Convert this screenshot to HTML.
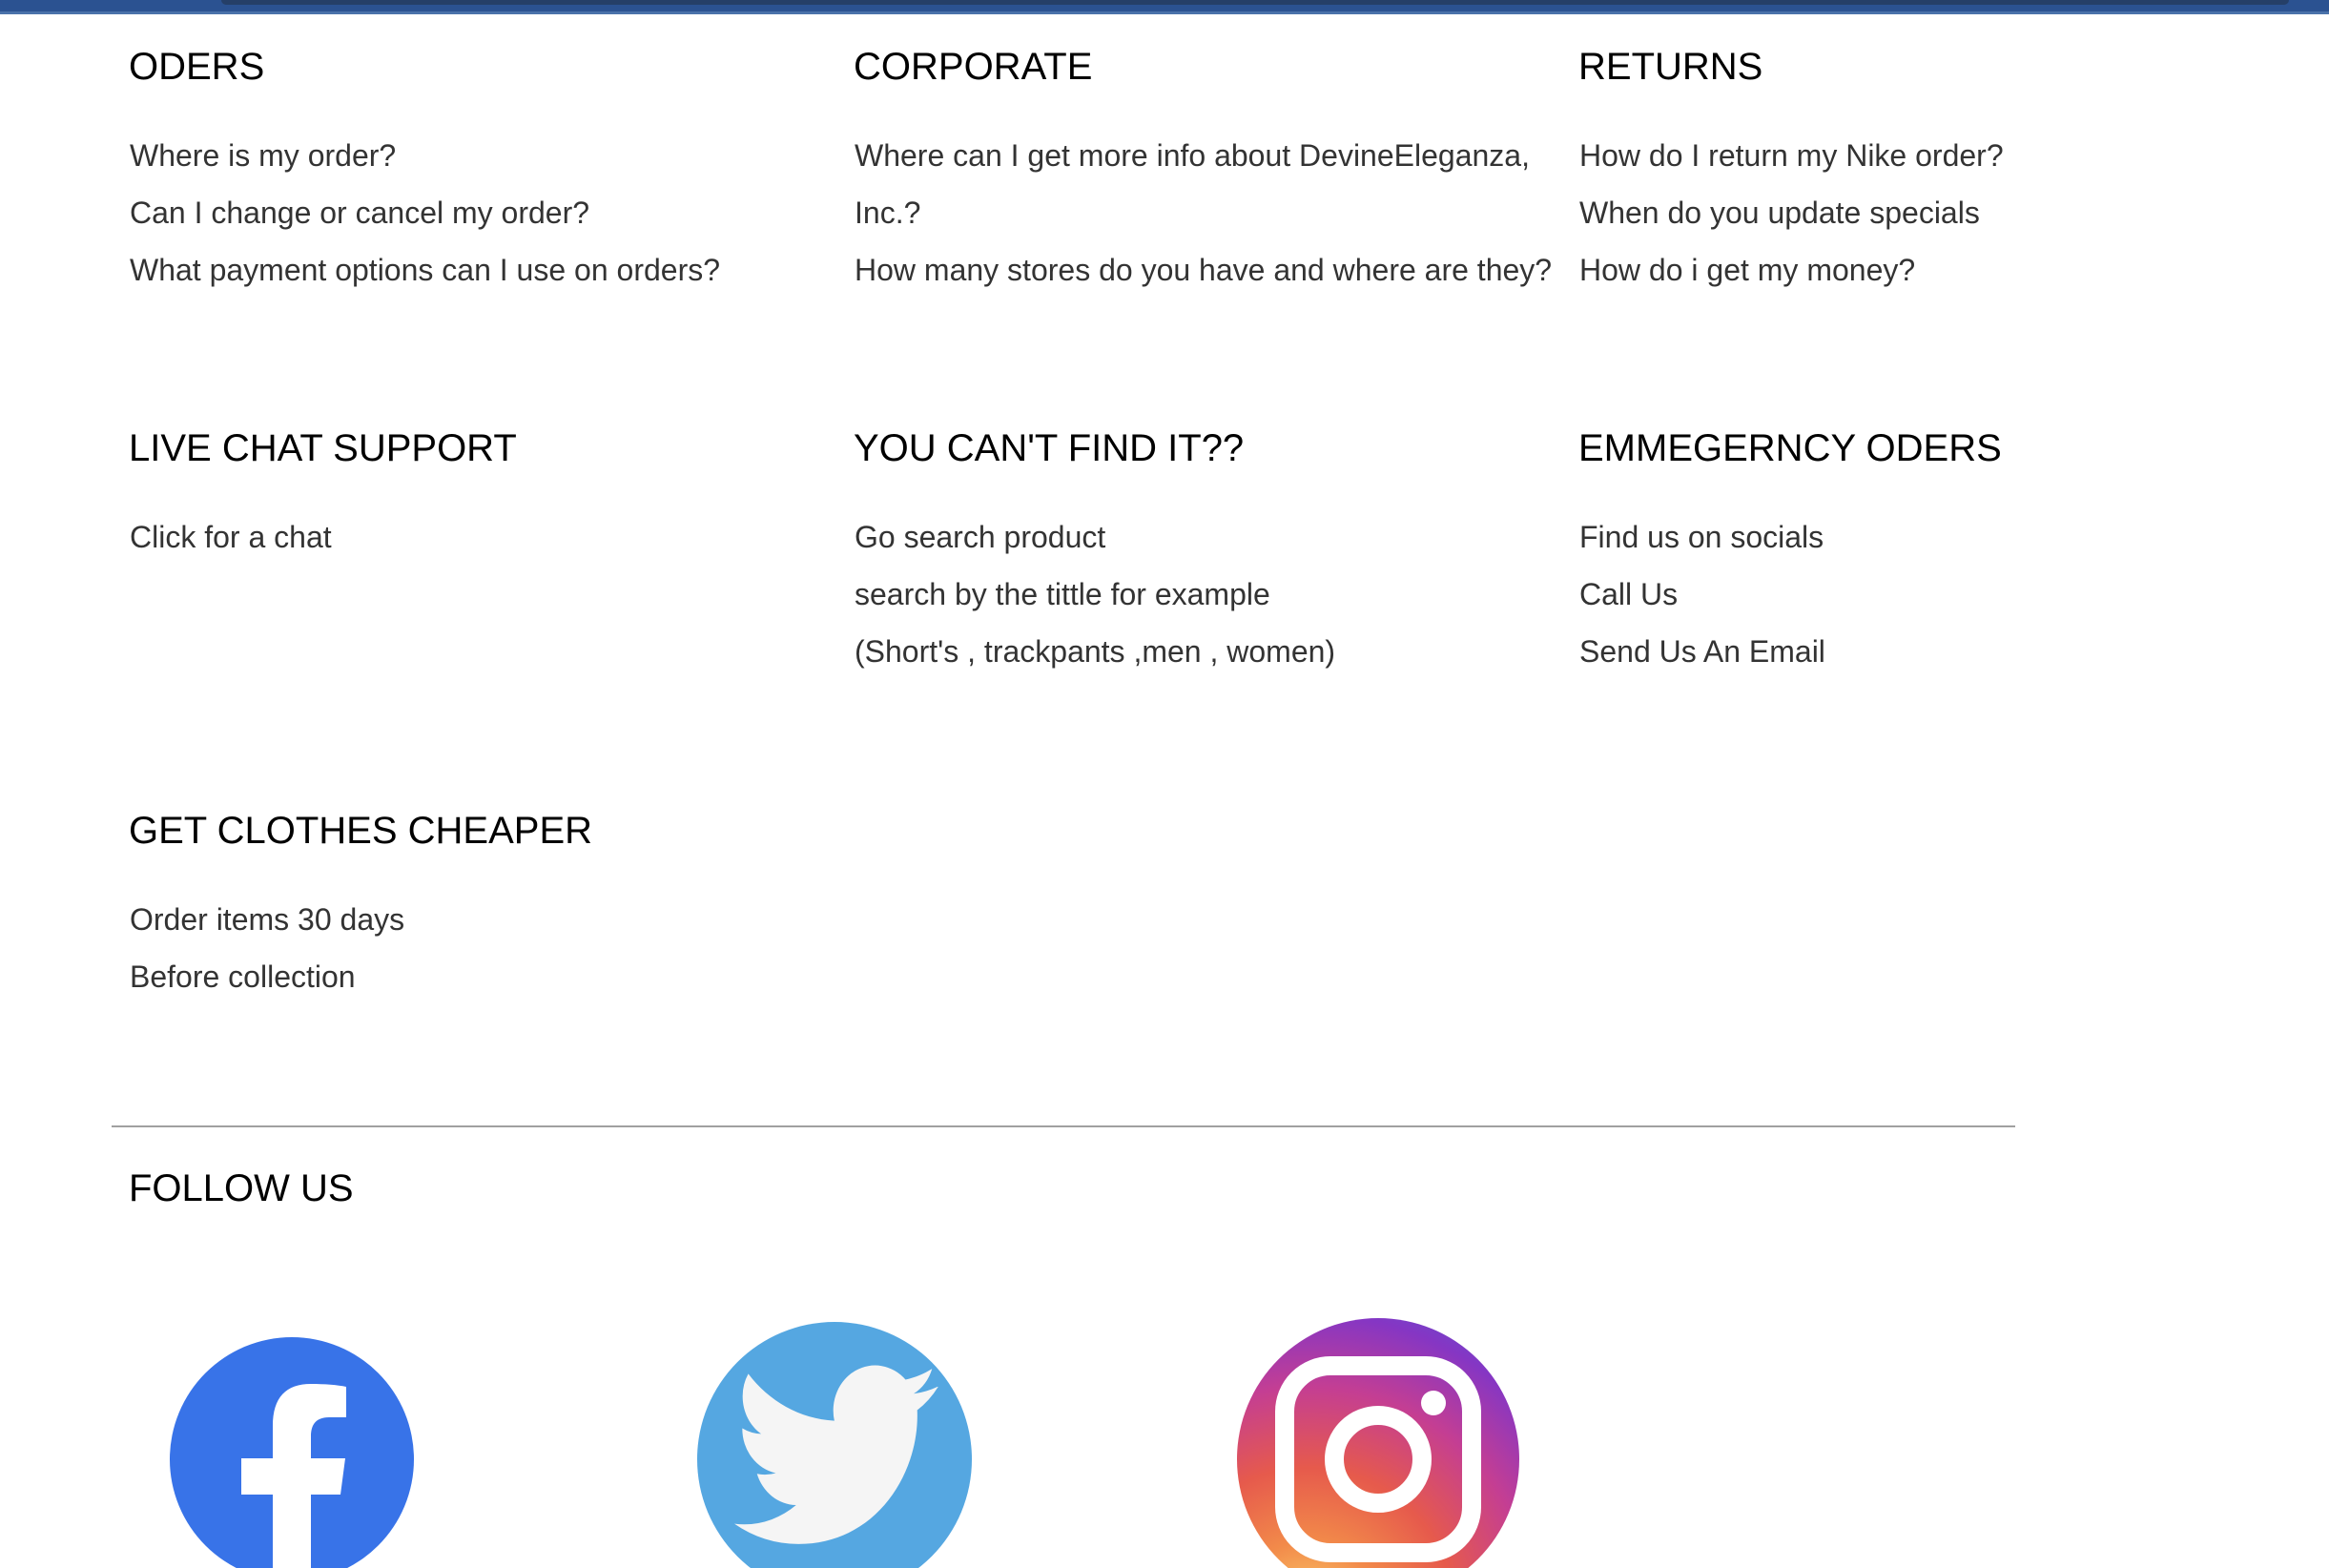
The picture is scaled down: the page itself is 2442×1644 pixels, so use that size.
<!DOCTYPE html>
<html><head><meta charset="utf-8">
<style>
html,body{margin:0;padding:0;background:#fff;width:2442px;height:1644px;overflow:hidden;position:relative;font-family:"Liberation Sans",Arial,sans-serif}
.h{position:absolute;font-size:40px;line-height:40px;color:#000;white-space:nowrap}
.l{position:absolute;font-size:32px;line-height:32px;color:#333;white-space:nowrap}
</style></head><body>
<div style="position:absolute;left:0;top:0;width:2442px;height:15px;background:#2b5291"></div>
<div style="position:absolute;left:232px;top:0;width:2168px;height:5px;background:#253f68;border-radius:0 0 8px 8px"></div>
<div style="position:absolute;left:0;top:12px;width:2442px;height:3px;background:#4a72aa"></div>

<div class="h" style="left:135px;top:50px">ODERS</div>
<div class="h" style="left:895px;top:50px">CORPORATE</div>
<div class="h" style="left:1655px;top:50px">RETURNS</div>
<div class="l" style="left:136px;top:147px">Where is my order?</div>
<div class="l" style="left:136px;top:207px">Can I change or cancel my order?</div>
<div class="l" style="left:136px;top:267px">What payment options can I use on orders?</div>
<div class="l" style="left:896px;top:147px">Where can I get more info about DevineEleganza,</div>
<div class="l" style="left:896px;top:207px">Inc.?</div>
<div class="l" style="left:896px;top:267px">How many stores do you have and where are they?</div>
<div class="l" style="left:1656px;top:147px">How do I return my Nike order?</div>
<div class="l" style="left:1656px;top:207px">When do you update specials</div>
<div class="l" style="left:1656px;top:267px">How do i get my money?</div>

<div class="h" style="left:135px;top:450px">LIVE CHAT SUPPORT</div>
<div class="h" style="left:895px;top:450px">YOU CAN'T FIND IT??</div>
<div class="h" style="left:1655px;top:450px">EMMEGERNCY ODERS</div>
<div class="l" style="left:136px;top:547px">Click for a chat</div>
<div class="l" style="left:896px;top:547px">Go search product</div>
<div class="l" style="left:896px;top:607px">search by the tittle for example</div>
<div class="l" style="left:896px;top:667px">(Short's , trackpants ,men , women)</div>
<div class="l" style="left:1656px;top:547px">Find us on socials</div>
<div class="l" style="left:1656px;top:607px">Call Us</div>
<div class="l" style="left:1656px;top:667px">Send Us An Email</div>

<div class="h" style="left:135px;top:851px">GET CLOTHES CHEAPER</div>
<div class="l" style="left:136px;top:948px">Order items 30 days</div>
<div class="l" style="left:136px;top:1008px">Before collection</div>

<div style="position:absolute;left:117px;top:1180px;width:1996px;height:2px;background:#a0a0a0"></div>
<div class="h" style="left:135px;top:1226px">FOLLOW US</div>

<svg style="position:absolute;left:0;top:0" width="2442" height="1644">
<defs>
<radialGradient id="ig" cx="0.25" cy="1.05" r="1.3">
<stop offset="0" stop-color="#fcd36c"/>
<stop offset="0.2" stop-color="#f28a4a"/>
<stop offset="0.4" stop-color="#e65a4c"/>
<stop offset="0.62" stop-color="#c43e93"/>
<stop offset="0.82" stop-color="#8536c4"/>
<stop offset="1" stop-color="#4f5bd5"/>
</radialGradient>
</defs>
<circle cx="306" cy="1530" r="128" fill="#3873e8"/>
<path d="M286 1644 V1567 H253 V1529 H286 V1495 C286 1465 300 1451 326 1451 C340 1451 354 1452 363 1454 V1486 H345 C331 1486 326 1494 326 1506 V1529 H362 L357 1567 H326 V1644 Z" fill="#fff"/>
<circle cx="875" cy="1530" r="144" fill="#55a7e1"/>
<path transform="translate(770,1410) scale(8.9,9.6)" fill="#f5f5f5" d="M23.953 4.57a10 10 0 01-2.825.775 4.958 4.958 0 002.163-2.723c-.951.555-2.005.959-3.127 1.184a4.92 4.92 0 00-8.384 4.482C7.69 8.095 4.067 6.13 1.64 3.162a4.822 4.822 0 00-.666 2.475c0 1.710.87 3.213 2.188 4.096a4.904 4.904 0 01-2.228-.616v.06a4.923 4.923 0 003.946 4.827 4.996 4.996 0 01-2.212.085 4.936 4.936 0 004.604 3.417 9.867 9.867 0 01-6.102 2.105c-.39 0-.779-.023-1.17-.067a13.995 13.995 0 007.557 2.209c9.053 0 13.998-7.496 13.998-13.985 0-.21 0-.42-.015-.63A9.935 9.935 0 0024 4.59z"/>
<circle cx="1445" cy="1530" r="148" fill="url(#ig)"/>
<rect x="1347" y="1432" width="196" height="196" rx="48" fill="none" stroke="#fff" stroke-width="20"/>
<circle cx="1445" cy="1530" r="46" fill="none" stroke="#fff" stroke-width="20"/>
<circle cx="1503" cy="1471" r="13" fill="#fff"/>
</svg>
</body></html>
